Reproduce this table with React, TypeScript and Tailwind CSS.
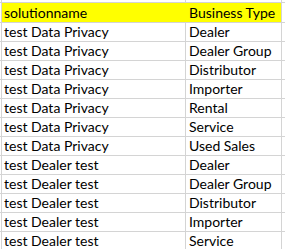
import React from "react";

const rows = [
    { name: "test Data Privacy", type: "Dealer" },
    { name: "test Data Privacy", type: "Dealer Group" },
    { name: "test Data Privacy", type: "Distributor" },
    { name: "test Data Privacy", type: "Importer" },
    { name: "test Data Privacy", type: "Rental" },
    { name: "test Data Privacy", type: "Service" },
    { name: "test Data Privacy", type: "Used Sales" },
    { name: "test Dealer test", type: "Dealer" },
    { name: "test Dealer test", type: "Dealer Group" },
    { name: "test Dealer test", type: "Distributor" },
    { name: "test Dealer test", type: "Importer" },
    { name: "test Dealer test", type: "Service" },
    { name: "", type: "" },
];

export default function App() {
    return (
        <div className="w-[285px] h-[249px] overflow-hidden bg-white text-[14px] text-black font-['Lato',sans-serif]">
            {/* sliver of the row above */}
            <div className="flex h-[3px] border-b border-[#d4d4d4]">
                <div className="w-px" />
                <div className="w-[185px] border-x border-[#d4d4d4]" />
                <div className="w-[96px] border-r border-[#d4d4d4]" />
            </div>

            {/* header */}
            <div className="flex h-[20px] border-b border-[#d4d4d4]">
                <div className="w-px" />
                <div className="w-[185px] border-l border-[#d4d4d4] bg-[#ffff00] pl-[2px] pr-px flex items-end leading-[19px]">
                    solutionname
                </div>
                <div className="w-[96px] border-r border-[#d4d4d4] bg-[#ffff00] pl-[3px] flex items-end leading-[19px] whitespace-nowrap">
                    Business Type
                </div>
            </div>

            {rows.map((row, idx) => (
                <div key={idx} className="flex h-[19px] border-b border-[#d4d4d4]">
                    <div className="w-px" />
                    <div className="w-[185px] border-x border-[#d4d4d4] pl-[2px] flex items-end leading-[18px] whitespace-nowrap">
                        {row.name}
                    </div>
                    <div className="w-[96px] border-r border-[#d4d4d4] pl-[3px] flex items-end leading-[18px] whitespace-nowrap">
                        {row.type}
                    </div>
                </div>
            ))}
        </div>
    );
}
